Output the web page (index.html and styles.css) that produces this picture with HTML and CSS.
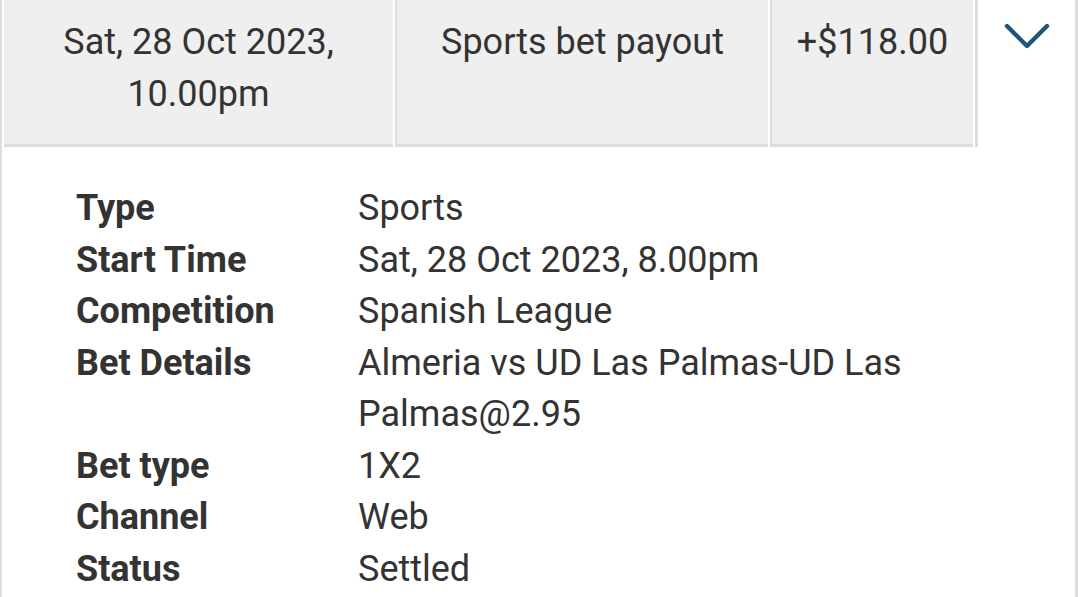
FILE: index.html
```html
<!DOCTYPE html>
<html lang="en">
<head>
    <meta charset="UTF-8">
    <title>Transaction Details</title>
    <link rel="stylesheet" href="styles.css">
</head>
<body>
    <div class="transaction">
        <div class="summary-row">
            <div class="cell cell-date">Sat, 28 Oct 2023,<br>10.00pm</div>
            <div class="cell cell-desc">Sports bet payout</div>
            <div class="cell cell-amount">+$118.00</div>
            <div class="toggle">
                <svg width="46" height="28" viewBox="0 0 46 28">
                    <polyline points="3,4 23,24 43,4" fill="none" stroke="#1d557c" stroke-width="4.4" stroke-linecap="round" stroke-linejoin="round"/>
                </svg>
            </div>
        </div>
        <div class="details">
            <div class="label">Type</div>
            <div class="value">Sports</div>
            <div class="label">Start Time</div>
            <div class="value">Sat, 28 Oct 2023, 8.00pm</div>
            <div class="label">Competition</div>
            <div class="value">Spanish League</div>
            <div class="label">Bet Details</div>
            <div class="value">Almeria vs UD Las Palmas-UD Las Palmas@2.95</div>
            <div class="label">Bet type</div>
            <div class="value">1X2</div>
            <div class="label">Channel</div>
            <div class="value">Web</div>
            <div class="label">Status</div>
            <div class="value">Settled</div>
        </div>
    </div>
</body>
</html>
```

FILE: styles.css
```css
body {
    margin: 0;
    font-family: Roboto, "Liberation Sans", sans-serif;
    color: #333;
    background: #fff;
}
.transaction {
    width: 1078px;
    min-height: 597px;
    box-sizing: border-box;
    border-left: 2px solid #dedede;
    border-right: 3px solid #dedede;
}
.summary-row {
    display: flex;
    gap: 2px;
    padding-left: 2px;
}
.cell {
    background-color: #efefef;
    border-bottom: 3px solid #dedede;
    font-size: 36px;
    line-height: 51.5px;
    text-align: center;
    padding: 17px 0 24px;
    height: 103px;
}
.cell-date {
    width: 389px;
}
.cell-desc {
    width: 371px;
    border-left: 2px solid #dedede;
}
.cell-amount {
    width: 201px;
    border-left: 2px solid #dedede;
}
.toggle {
    flex: 1;
    border-left: 3px solid #dedede;
    height: 147px;
    display: flex;
    justify-content: center;
    align-items: flex-start;
    padding-top: 22px;
    box-sizing: border-box;
}
.details {
    display: grid;
    grid-template-columns: 282px 560px;
    padding: 36px 0 0 74px;
    font-size: 36px;
    line-height: 51.5px;
}
.label {
    font-weight: bold;
}
```
